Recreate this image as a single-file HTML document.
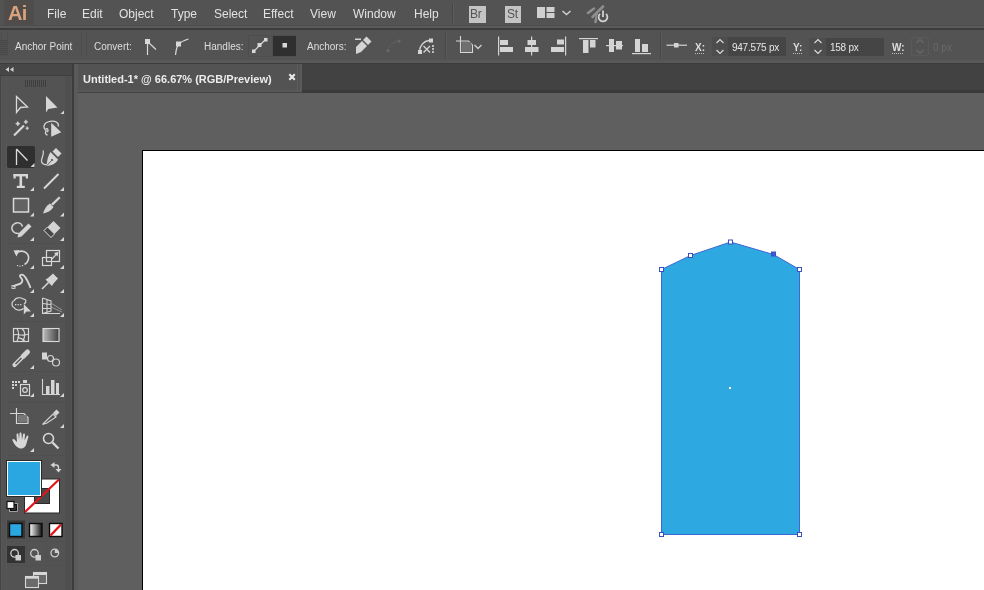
<!DOCTYPE html>
<html><head><meta charset="utf-8">
<style>
*{margin:0;padding:0;box-sizing:border-box}
html,body{width:984px;height:590px;overflow:hidden;background:#535353;font-family:"Liberation Sans",sans-serif;color:#dcdcdc;position:relative}
.a{position:absolute;white-space:nowrap;will-change:transform}
.menu{font-size:12px;color:#e2e2e2;top:7px;line-height:14px}
.ctl{font-size:10px;color:#dedede;top:41px;line-height:11px}
svg{position:absolute;left:0;top:0}
</style></head><body>
<!-- ============ menu bar ============ -->
<div class="a" style="left:0;top:0;width:984px;height:25px;background:#535353"></div>
<div class="a" style="left:0;top:25px;width:984px;height:1px;background:#4e4e4e"></div>
<div class="a" style="left:0;top:26px;width:984px;height:2px;background:#595959"></div>
<div class="a" style="left:0;top:28px;width:984px;height:2px;background:#3d3d3d"></div>
<!-- Ai logo -->
<div class="a" style="left:4px;top:0;width:30px;height:25px;background:#504c4a"></div>
<div class="a" style="left:8px;top:2px;font-size:20px;font-weight:bold;color:#d9a27e;line-height:22px;letter-spacing:-0.8px">Ai</div>
<div class="a menu" style="left:47px">File</div>
<div class="a menu" style="left:82px">Edit</div>
<div class="a menu" style="left:119px">Object</div>
<div class="a menu" style="left:171px">Type</div>
<div class="a menu" style="left:214px">Select</div>
<div class="a menu" style="left:263px">Effect</div>
<div class="a menu" style="left:310px">View</div>
<div class="a menu" style="left:353px">Window</div>
<div class="a menu" style="left:414px">Help</div>
<div class="a" style="left:452px;top:3px;width:1px;height:20px;background:#474747"></div>
<div class="a" style="left:453px;top:3px;width:1px;height:20px;background:#5c5c5c"></div>
<!-- Br / St -->
<div class="a" style="left:469px;top:6px;width:17px;height:17px;background:#c4c4c4"></div>
<div class="a" style="left:470px;top:7px;font-size:12px;color:#555555;line-height:14px;letter-spacing:-0.3px">Br</div>
<div class="a" style="left:505px;top:6px;width:16px;height:17px;background:#c4c4c4"></div>
<div class="a" style="left:507px;top:7px;font-size:12px;color:#555555;line-height:14px;letter-spacing:-0.3px">St</div>

<!-- ============ control bar ============ -->
<div class="a" style="left:0;top:30px;width:984px;height:30px;background:#535353"></div>
<div class="a" style="left:0;top:60px;width:984px;height:3px;background:#585858"></div>
<div class="a" style="left:0;top:63px;width:984px;height:1px;background:#3c3c3c"></div>
<div class="a ctl" style="left:15px">Anchor Point</div>
<div class="a ctl" style="left:94px">Convert:</div>
<div class="a ctl" style="left:204px">Handles:</div>
<div class="a ctl" style="left:307px">Anchors:</div>
<!-- handles group -->
<div class="a" style="left:248px;top:35px;width:48px;height:22px;background:#4e4e4e"></div>
<div class="a" style="left:249px;top:36px;width:23px;height:20px;background:#535353"></div>
<div class="a" style="left:273px;top:36px;width:23px;height:20px;background:#2f2f2f"></div>
<!-- X field -->
<div class="a ctl" style="left:695px;top:42px;font-weight:bold">X:</div>
<div class="a" style="left:712px;top:37px;width:74px;height:19px;background:#474747"></div>
<div class="a" style="left:712px;top:37px;width:16px;height:19px;background:#4d4d4d"></div>
<div class="a" style="left:729px;top:37px;width:57px;height:19px;background:#454545"></div>
<div class="a ctl" style="left:732px;top:42px;letter-spacing:-0.25px;color:#e6e6e6">947.575 px</div>
<!-- Y field -->
<div class="a ctl" style="left:793px;top:42px;font-weight:bold">Y:</div>
<div class="a" style="left:809px;top:38px;width:75px;height:18px;background:#474747"></div>
<div class="a" style="left:809px;top:38px;width:17px;height:18px;background:#4d4d4d"></div>
<div class="a" style="left:827px;top:38px;width:57px;height:18px;background:#454545"></div>
<div class="a ctl" style="left:830px;top:42px;letter-spacing:-0.25px;color:#e6e6e6">158 px</div>
<!-- W field -->
<div class="a ctl" style="left:892px;top:42px;font-weight:bold">W:</div>
<div class="a" style="left:911px;top:37px;width:18px;height:19px;border:1px solid #5a5a5a;border-radius:2px"></div>
<div class="a ctl" style="left:933px;top:42px;color:#6a6a6a">0 px</div>

<!-- ============ toolbar ============ -->
<div class="a" style="left:0;top:64px;width:72px;height:526px;background:#535353"></div>
<div class="a" style="left:0;top:64px;width:72px;height:11px;background:#474747"></div>
<div class="a" style="left:0;top:75px;width:72px;height:1px;background:#3f3f3f"></div>
<div class="a" style="left:0;top:76px;width:1px;height:514px;background:#444444"></div>
<div class="a" style="left:1px;top:76px;width:1px;height:514px;background:#575757"></div>
<div class="a" style="left:6px;top:76px;width:1px;height:514px;background:#575757"></div>
<div class="a" style="left:65px;top:76px;width:6px;height:514px;background:#4f4f4f"></div>
<div class="a" style="left:72px;top:64px;width:2px;height:526px;background:#3c3c3c"></div>
<div class="a" style="left:74px;top:64px;width:4px;height:526px;background:#5a5a5a"></div>
<!-- selected tool -->
<div class="a" style="left:7px;top:146px;width:28px;height:22px;background:#2f2f2f;border-radius:2px"></div>

<!-- ============ tab bar ============ -->
<div class="a" style="left:78px;top:64px;width:906px;height:26px;background:#424242"></div>
<div class="a" style="left:78px;top:90px;width:906px;height:3px;background:#3a3a3a"></div>
<div class="a" style="left:78px;top:64px;width:224px;height:26px;background:#535353"></div>
<div class="a" style="left:78px;top:90px;width:224px;height:2px;background:#585858"></div>
<div class="a" style="left:78px;top:92px;width:224px;height:1px;background:#424242"></div>
<div class="a" style="left:297px;top:64px;width:1px;height:28px;background:#5c5c5c"></div>
<div class="a" style="left:300px;top:64px;width:2px;height:28px;background:#5a5a5a"></div>
<div class="a" style="left:83px;top:73px;font-size:11px;font-weight:bold;color:#ececec;line-height:12px">Untitled-1* @ 66.67% (RGB/Preview)</div>

<!-- ============ pasteboard / artboard ============ -->
<div class="a" style="left:78px;top:93px;width:906px;height:497px;background:#5f5f5f"></div>
<div class="a" style="left:142px;top:150px;width:842px;height:440px;background:#000000"></div>
<div class="a" style="left:143px;top:151px;width:841px;height:439px;background:#ffffff"></div>

<svg width="984" height="590" viewBox="0 0 984 590">


<!-- tab close -->
<path d="M289.3,74.3 L294.8,79.8 M294.8,74.3 L289.3,79.8" stroke="#ececec" stroke-width="2"/>
<!-- ===== menu bar icons ===== -->
<!-- workspace -->
<g fill="#d0d0d0">
  <rect x="537" y="7" width="8" height="11"/>
  <rect x="546.5" y="7" width="8" height="5"/>
  <rect x="546.5" y="13" width="8" height="5"/>
</g>
<path d="M562.5,11 L566.5,14.5 L570.5,11" fill="none" stroke="#d0d0d0" stroke-width="1.5"/>
<!-- sync/broadcast -->
<g stroke="#8e8e8e" stroke-width="2.6" fill="none" stroke-linecap="round">
  <line x1="588" y1="13" x2="594" y2="8.5"/>
  <line x1="592.5" y1="17" x2="603" y2="6.5"/>
  <line x1="595.5" y1="22" x2="597" y2="15"/>
</g>
<circle cx="603" cy="17.2" r="6" fill="#535353"/>
<path d="M600,13.8 A4.4,4.4 0 1 0 606,13.8" fill="none" stroke="#d2d2d2" stroke-width="1.8"/>
<line x1="603" y1="10.5" x2="603" y2="17" stroke="#d2d2d2" stroke-width="1.8"/>

<!-- ===== control bar icons ===== -->
<!-- grip -->
<g fill="#454545"><rect x="0" y="40" width="8" height="1"/><rect x="0" y="42" width="8" height="1"/><rect x="0" y="44" width="8" height="1"/><rect x="0" y="46" width="8" height="1"/><rect x="0" y="48" width="8" height="1"/><rect x="0" y="50" width="8" height="1"/><rect x="0" y="52" width="8" height="1"/><rect x="0" y="54" width="8" height="1"/></g><g fill="#4d4d4d"><rect x="1" y="32" width="1" height="24"/><rect x="7" y="32" width="1" height="24"/></g>
<!-- separators -->
<g fill="#4c4c4c"><rect x="81" y="32" width="1" height="24"/><rect x="86" y="32" width="1" height="24"/></g>
<g fill="#474747">
  <rect x="445" y="33" width="1" height="25"/>
  <rect x="660" y="33" width="1" height="25"/>
</g>
<g fill="#5b5b5b">
  <rect x="446" y="33" width="1" height="25"/>
  <rect x="661" y="33" width="1" height="25"/>
</g>
<!-- convert corner -->
<g stroke="#d8d8d8" stroke-width="1.2" fill="none">
  <line x1="147.5" y1="43" x2="147.5" y2="55"/>
  <line x1="149" y1="43" x2="156" y2="49.5"/>
</g>
<rect x="145" y="39" width="5" height="5" fill="#d8d8d8"/>
<!-- convert smooth -->
<path d="M175.5,55 C176,50 177,46 179,44 C182,41 185,40 188.5,39" fill="none" stroke="#d8d8d8" stroke-width="1.2"/>
<rect x="176" y="41.5" width="5" height="5" fill="#d8d8d8"/>
<!-- handles icons -->
<line x1="254" y1="51" x2="265" y2="40" stroke="#d8d8d8" stroke-width="1.2"/>
<g fill="#d8d8d8">
  <rect x="252" y="49.5" width="3.5" height="3.5"/>
  <rect x="264" y="38" width="3.5" height="3.5"/>
  <rect x="257.5" y="43" width="4" height="4"/>
  <rect x="282.5" y="43" width="4.5" height="4.5"/>
</g>
<!-- anchors: pen minus -->
<rect x="355" y="38.5" width="6" height="1.5" fill="#d4d4d4"/>
<path d="M356,54 L356,47 L362,41 L367,46 L361,52 Z" fill="#d4d4d4"/>
<path d="M363,40 L366.5,36.5 L371.5,41.5 L368,45 Z" fill="#d4d4d4"/>
<!-- anchors disabled -->
<g fill="#6a6a6a"><circle cx="388" cy="50.5" r="1.6"/><circle cx="399" cy="41" r="1.6"/></g>
<path d="M388,50.5 C389,45 393,42 399,41" fill="none" stroke="#606060" stroke-width="1"/>
<!-- anchors cut -->
<path d="M419.5,51 C420,45 424,41 429,40.5" fill="none" stroke="#d4d4d4" stroke-width="1.3"/>
<rect x="418" y="50" width="4" height="4" fill="#d4d4d4"/>
<rect x="429" y="38.5" width="4" height="4" fill="#d4d4d4"/>
<path d="M423.5,46 L430,52.5 M423.5,52.5 L430,46" stroke="#d4d4d4" stroke-width="1.3"/>
<g fill="#bdbdbd"><rect x="432" y="45" width="2" height="2"/><rect x="432" y="48" width="2" height="2"/><rect x="432" y="51" width="2" height="2"/></g>
<!-- artboard options icon -->
<g fill="none" stroke="#d6d6d6" stroke-width="1.1">
  <path d="M460.5,36 L460.5,52.5 L472.5,52.5 L472.5,45 L468.5,41 L456,41"/>
</g>
<rect x="461.5" y="42" width="10" height="10" fill="#6f6f6f"/>
<path d="M474.5,45 L478,48.5 L481.5,45" fill="none" stroke="#d0d0d0" stroke-width="1.3"/>
<!-- align -->
<g fill="#d4d4d4">
  <rect x="498" y="36.5" width="1.2" height="19"/><rect x="500" y="40" width="8" height="5"/><rect x="500" y="47" width="13" height="5"/>
  <rect x="531" y="36.5" width="1.2" height="19"/><rect x="527.5" y="40" width="8.5" height="5"/><rect x="525" y="47" width="13.5" height="5"/>
  <rect x="565" y="36.5" width="1.2" height="19"/><rect x="557" y="39.5" width="7" height="5"/><rect x="551" y="47" width="13" height="5"/>
  <rect x="579" y="38" width="19" height="1.2"/><rect x="583" y="40" width="5.5" height="13"/><rect x="590" y="40" width="5.5" height="7.5"/>
  <rect x="606" y="45" width="17" height="1.2"/><rect x="609" y="39" width="5" height="13"/><rect x="616" y="41" width="6" height="8.5"/>
  <rect x="632" y="53" width="19" height="1.2"/><rect x="635" y="39" width="5" height="13"/><rect x="642" y="44" width="6" height="8"/>
</g>
<!-- reference point -->
<rect x="666.5" y="44.6" width="20.5" height="1.2" fill="#d4d4d4"/>
<rect x="674" y="43" width="4.5" height="4.5" fill="#d4d4d4"/>
<!-- dotted underlines -->
<g fill="#bdbdbd">
  <rect x="695" y="53" width="1" height="1"/><rect x="697" y="53" width="1" height="1"/><rect x="699" y="53" width="1" height="1"/><rect x="701" y="53" width="1" height="1"/><rect x="703" y="53" width="1" height="1"/>
  <rect x="793" y="53" width="1" height="1"/><rect x="795" y="53" width="1" height="1"/><rect x="797" y="53" width="1" height="1"/><rect x="799" y="53" width="1" height="1"/><rect x="801" y="53" width="1" height="1"/>
  <rect x="892" y="53" width="1" height="1"/><rect x="894" y="53" width="1" height="1"/><rect x="896" y="53" width="1" height="1"/><rect x="898" y="53" width="1" height="1"/><rect x="900" y="53" width="1" height="1"/><rect x="902" y="53" width="1" height="1"/>
</g>
<!-- spinners -->
<g fill="none" stroke="#d8d8d8" stroke-width="1.2">
  <path d="M716.5,43 L720,39.5 L723.5,43 M716.5,50 L720,53.5 L723.5,50"/>
  <path d="M814.5,43 L818,39.5 L821.5,43 M814.5,50 L818,53.5 L821.5,50"/>
</g>
<g fill="none" stroke="#6a6a6a" stroke-width="1.2">
  <path d="M916.5,43 L920,39.5 L923.5,43 M916.5,50 L920,53.5 L923.5,50"/>
</g>


<!-- ===== fill/stroke ===== -->
<rect x="24" y="478.5" width="36" height="35" fill="#2a2a2a"/>
<rect x="25" y="479.5" width="34" height="33" fill="#ffffff"/>
<rect x="34" y="488" width="16" height="16" fill="#2a2a2a"/>
<rect x="35" y="489" width="14" height="14" fill="#484848"/>
<line x1="25" y1="512" x2="59" y2="479.5" stroke="#e3141c" stroke-width="2.2"/>
<rect x="6" y="460" width="36" height="37" fill="#2a2a2a"/>
<rect x="7" y="461" width="34" height="35" fill="#ffffff"/>
<rect x="8" y="462" width="32" height="33" fill="#2aa6e1"/>
<!-- swap -->
<path d="M54,465 L56,465 C57.5,465 58.5,466 58.5,467.5 L58.5,469.5" fill="none" stroke="#d4d4d4" stroke-width="1.4"/>
<polygon points="50.5,465 54.5,462 54.5,468" fill="#d4d4d4"/>
<polygon points="55.5,469 61.5,469 58.5,472.5" fill="#d4d4d4"/>
<!-- default -->
<rect x="9.5" y="503.5" width="8" height="8" fill="#111" stroke="#bbb" stroke-width="0.8"/>
<rect x="11.5" y="505.5" width="4" height="4" fill="#535353"/>
<rect x="7" y="501.5" width="7" height="7" fill="#ffffff" stroke="#111" stroke-width="1.2"/>
<!-- mode buttons -->
<rect x="7" y="520.5" width="18" height="18" fill="#373737"/>
<rect x="9.5" y="523.5" width="12.5" height="13" fill="#2aa6e1" stroke="#0c0c0c" stroke-width="1.4"/>
<rect x="29.5" y="523.5" width="12.5" height="13" fill="url(#gr2)" stroke="#0c0c0c" stroke-width="1.4"/>
<rect x="49.5" y="523.5" width="12.5" height="13" fill="#ffffff" stroke="#0c0c0c" stroke-width="1.4"/>
<line x1="50.5" y1="535.5" x2="61" y2="524.5" stroke="#e3141c" stroke-width="2.4"/>
<g fill="#505050"><rect x="26" y="520" width="1" height="20"/><rect x="46" y="520" width="1" height="20"/><rect x="26" y="545" width="1" height="19"/><rect x="46" y="545" width="1" height="19"/><rect x="7" y="541" width="58" height="1"/><rect x="7" y="565" width="58" height="1"/></g>
<!-- draw modes -->
<rect x="7" y="546" width="18" height="17" fill="#333333"/>
<g fill="none" stroke="#cfcfcf" stroke-width="1.3">
  <circle cx="14.6" cy="553.3" r="3.8"/>
  <circle cx="34.5" cy="553.3" r="3.8"/>
  <circle cx="54.8" cy="553" r="3.8"/>
</g>
<g fill="#cfcfcf"><rect x="15.5" y="555" width="5.5" height="5.5"/><rect x="35.5" y="555" width="5.5" height="5.5"/></g>
<path d="M54.8,553 L54.8,549.5 A3.5,3.5 0 0 1 58.3,553 Z" fill="#cfcfcf"/>
<!-- screen mode -->
<rect x="33.5" y="572.5" width="13" height="11" fill="#6a6a6a" stroke="#d6d6d6" stroke-width="1.1"/>
<rect x="33.5" y="572.5" width="13" height="2.5" fill="#d6d6d6"/>
<rect x="25.5" y="576.5" width="13" height="11" fill="#6a6a6a" stroke="#d6d6d6" stroke-width="1.1"/>
<rect x="25.5" y="576.5" width="13" height="2.2" fill="#d6d6d6"/>
<!-- toolbar group separators -->
<g fill="#4f4f4f">
  <rect x="7" y="243" width="58" height="1"/>
  <rect x="7" y="321" width="58" height="1"/>
  <rect x="7" y="371" width="58" height="1"/>
  <rect x="7" y="402" width="58" height="1"/>
  <rect x="7" y="455" width="58" height="1"/>
</g>

<!-- ===== toolbar icons ===== -->
<g fill="none" stroke="#d9d9d9" stroke-width="1.3" stroke-linejoin="miter">
  <!-- selection -->
  <polygon points="16.5,96.5 27.5,107 20.5,107.5 16.5,112.5"/>
</g>
<g fill="#d6d6d6">
  <!-- direct selection -->
  <polygon points="46,96 57.5,107.4 48.3,109 46,112.5"/>
  <!-- corner triangles -->
  <polygon points="64,110.5 64,114 60.5,114"/>
  <polygon points="34.5,163 34.5,167 30.5,167"/>
  <polygon points="34,187 34,191 30,191"/>
  <polygon points="64,187 64,191 60,191"/>
  <polygon points="34,212.5 34,216.5 30,216.5"/>
  <polygon points="64,212.5 64,216.5 60,216.5"/>
  <polygon points="34,237 34,241 30,241"/>
  <polygon points="64,237 64,241 60,241"/>
  <polygon points="34,265 34,269 30,269"/>
  <polygon points="64,265 64,269 60,269"/>
  <polygon points="34,289 34,293 30,293"/>
  <polygon points="64,289 64,293 60,293"/>
  <polygon points="34,313 34,317 30,317"/>
  <polygon points="64,313 64,317 60,317"/>
  <polygon points="34,365 34,369 30,369"/>
  <polygon points="34,393 34,397 30,397"/>
  <polygon points="64,393 64,397 60,397"/>
  <polygon points="64,424 64,428 60,428"/>
  <polygon points="34,448 34,452 30,452"/>
</g>
<!-- magic wand -->
<g stroke="#d6d6d6" fill="#d6d6d6">
  <line x1="14" y1="135.5" x2="24" y2="125.5" stroke-width="2.2"/>
  <path d="M17.8,121.5 L18.5,123 L20,123.7 L18.5,124.4 L17.8,126 L17.1,124.4 L15.6,123.7 L17.1,123 Z" stroke-width="0.6"/>
  <path d="M25.9,119.8 L26.5,121.2 L27.9,121.9 L26.5,122.6 L25.9,124 L25.3,122.6 L23.9,121.9 L25.3,121.2 Z" stroke-width="0.6"/>
  <path d="M27.2,126.5 L27.7,127.6 L28.8,128.2 L27.7,128.8 L27.2,130 L26.7,128.8 L25.6,128.2 L26.7,127.6 Z" stroke-width="0.5"/>
</g>
<!-- lasso -->
<g fill="none" stroke="#d6d6d6" stroke-width="1.3">
  <path d="M46.5,131 C42.5,128 43,122.5 50,121.3 C56,120.5 59,123 58.3,126.5"/>
  <path d="M46.5,131 C44.5,132 45.5,134.5 47.5,135 M45.5,129 C48,128 49,131 47,132"/>
</g>
<polygon points="51.2,122.7 61.2,132.3 51.2,136.7" fill="#d6d6d6"/>
<!-- anchor point tool (selected) -->
<g fill="none" stroke="#dcdcdc" stroke-width="1.3">
  <line x1="16.5" y1="149" x2="16.5" y2="165"/>
  <line x1="16.5" y1="149" x2="27.5" y2="160.5"/>
</g>
<!-- pen -->
<polygon points="52.5,151.5 56,148 61.5,153.5 58,157" fill="#d6d6d6"/>
<path d="M50.5,152 L58,159.5 C56.5,163 52,165.5 46.5,166 C47,160.5 48,155.5 50.5,152 Z" fill="#d6d6d6"/>
<line x1="47" y1="165.5" x2="51.5" y2="160.5" stroke="#535353" stroke-width="0.9"/>
<circle cx="52" cy="160" r="1.1" fill="#535353"/>
<path d="M43,150.5 C44.5,153 42,157 41.5,160.5 C41.2,163.5 44,165 47,164.5" fill="none" stroke="#d4d4d4" stroke-width="1.2"/>
<!-- type -->
<g fill="#d8d8d8">
  <rect x="13.5" y="174" width="14.5" height="2.4"/>
  <rect x="13.5" y="174" width="2.2" height="4.5"/>
  <rect x="25.8" y="174" width="2.2" height="4.5"/>
  <rect x="19.5" y="174" width="2.6" height="14"/>
  <rect x="16.8" y="185.8" width="8" height="2.2"/>
</g>
<!-- line -->
<line x1="44" y1="188.5" x2="58.5" y2="174" stroke="#d8d8d8" stroke-width="2"/>
<!-- rectangle -->
<rect x="13.5" y="198.5" width="15" height="13.5" fill="#626262" stroke="#dadada" stroke-width="1.5"/>
<!-- paintbrush -->
<g fill="#d4d4d4">
  <path d="M51,204 L59,196.5 L60.5,198 L53,205.5 Z"/>
  <path d="M43,213.5 C44.5,209 46.5,205.5 50,203.5 L53.5,207 C51.5,210.5 48,212.5 43,213.5 Z"/>
</g>
<!-- shaper -->
<path d="M19,233.5 C12.5,234 10,228 13.5,224.5 C16.5,221.5 21.5,222.5 22.5,226.5" fill="none" stroke="#d4d4d4" stroke-width="1.5"/>
<path d="M17.5,237.5 L18.5,233.5 L28.5,223.5 L31.5,226.5 L21.5,236.5 Z" fill="#d4d4d4"/>
<!-- eraser -->
<path d="M44,230.5 L53.5,221 L60.5,228 L51,237.5 Z" fill="#d4d4d4"/>
<path d="M44,230.5 L47.5,227 L54.5,234 L51,237.5 Z" fill="#474747" stroke="#d4d4d4" stroke-width="1"/>
<!-- rotate -->
<path d="M15.5,254 C18,250.5 24,250 27,253.5 C30,257 28.5,262.5 24.5,264.5" fill="none" stroke="#d6d6d6" stroke-width="1.6"/>
<polygon points="13.5,250.5 19.5,250 16.5,256.5" fill="#d6d6d6"/>
<g fill="#d0d0d0"><rect x="17" y="265" width="1.2" height="1.2"/><rect x="19.5" y="265.5" width="1.2" height="1.2"/><rect x="22" y="265" width="1.2" height="1.2"/></g>
<!-- scale -->
<g fill="none" stroke="#d8d8d8" stroke-width="1.2">
  <rect x="46.5" y="250.5" width="13" height="11"/>
  <rect x="42.5" y="257.5" width="9" height="8"/>
  <line x1="52" y1="259" x2="57.5" y2="253"/>
</g>
<polygon points="58.5,252 54,253 57.5,256.5" fill="#d8d8d8"/>
<!-- width tool -->
<path d="M13.5,287 C16,283 20,286 22,282 C24,278 18,277 20.5,275 C23,273.5 25.5,277 27,280 C28.5,283 30,286 30.5,288" fill="none" stroke="#d4d4d4" stroke-width="1.8"/>
<rect x="12" y="285.5" width="3" height="3" fill="none" stroke="#d4d4d4" stroke-width="0.9"/>
<!-- puppet warp pin -->
<path d="M48,278 L53,273.5 L58,278.5 L53.5,283.5 L52,286 L45.5,279.5 Z" fill="#d4d4d4"/>
<line x1="42" y1="289" x2="48.5" y2="282.5" stroke="#d4d4d4" stroke-width="1.6"/>
<!-- shape builder -->
<path d="M24,304 C27,302 26.5,299 23,298.8 C20.5,297 15,297.5 14.5,300.5 C11.5,301 11,306 14,307.5 C15.5,310.5 21,311 23.5,308.5" fill="none" stroke="#d4d4d4" stroke-width="1.2"/>
<g fill="#d4d4d4"><rect x="15" y="304" width="1.3" height="1.3"/><rect x="17.5" y="304" width="1.3" height="1.3"/><rect x="20" y="304" width="1.3" height="1.3"/></g>
<polygon points="23.8,304 31,311.5 26.5,311.5 23.8,314.5" fill="#d4d4d4"/>
<!-- perspective grid -->
<g fill="none" stroke="#d4d4d4" stroke-width="1.1">
  <path d="M42.5,298 L42.5,313.5 L60,313.5"/>
  <path d="M42.5,298 L51,301 L51,311 L42.5,313.5"/>
  <path d="M47,299.5 L47,312.5 M42.5,303.5 L51,304.5 M42.5,308.5 L51,308.5"/>
  <path d="M51,303 L62,310 M51,307 L62,312" stroke="#a8a8a8" stroke-width="0.8"/>
</g>
<!-- mesh -->
<g fill="none" stroke="#d6d6d6" stroke-width="1.2">
  <rect x="13.5" y="328.5" width="15" height="13"/>
  <path d="M17,328.5 C19,332 19,337 17,341.5 M13.5,335 C17,333 22,337 28.5,334 M22,328.5 C26,332 25,338 22.5,341.5 M17.5,337 C20,339 23,338 25,341.5"/>
</g>
<!-- gradient -->
<defs><linearGradient id="gr" x1="0" x2="1" y1="0" y2="0"><stop offset="0" stop-color="#bdbdbd"/><stop offset="1" stop-color="#3e3e3e"/></linearGradient>
<linearGradient id="gr2" x1="0" x2="1" y1="0" y2="0"><stop offset="0" stop-color="#ffffff"/><stop offset="1" stop-color="#111111"/></linearGradient></defs>
<rect x="43" y="328.5" width="16" height="13" fill="url(#gr)" stroke="#dadada" stroke-width="1.1"/>
<!-- eyedropper -->
<line x1="14.5" y1="365" x2="23.5" y2="356" stroke="#d4d4d4" stroke-width="4.2" stroke-linecap="round"/>
<line x1="15.5" y1="364" x2="21.5" y2="358" stroke="#535353" stroke-width="1.4"/>
<line x1="23.5" y1="356" x2="27.5" y2="352" stroke="#d4d4d4" stroke-width="5" stroke-linecap="round"/>
<!-- blend -->
<rect x="42" y="352.5" width="5" height="7" fill="#d4d4d4"/>
<g fill="none" stroke="#d4d4d4" stroke-width="1.2"><circle cx="50.5" cy="358.5" r="3"/><circle cx="56" cy="362.5" r="3.5"/></g>
<!-- symbol sprayer -->
<g fill="#d4d4d4">
  <rect x="12" y="381" width="2" height="2"/><rect x="15" y="381" width="2" height="2"/><rect x="18" y="381" width="2" height="2"/>
  <rect x="12" y="384" width="2" height="2"/><rect x="15" y="384" width="2" height="2"/>
  <rect x="12" y="387" width="2" height="2"/>
  <rect x="23" y="380" width="4" height="3"/>
</g>
<g fill="none" stroke="#d8d8d8" stroke-width="1.2"><rect x="20.5" y="384.5" width="9" height="11"/><circle cx="25" cy="390" r="2.3"/></g>
<!-- column graph -->
<path d="M42.5,379 L42.5,394.5 L60,394.5" fill="none" stroke="#d4d4d4" stroke-width="1.1"/>
<g fill="#d4d4d4"><rect x="46" y="386" width="3.5" height="8"/><rect x="51" y="380" width="3.5" height="14"/><rect x="56" y="383" width="3" height="11"/></g>
<!-- artboard -->
<g fill="none" stroke="#d6d6d6" stroke-width="1.2">
  <path d="M10,413.5 L17,413.5 M16.5,408 L16.5,413.5"/>
  <path d="M16.5,413.5 L24,413.5 L28,417.5 L28,423.5 L16.5,423.5 Z"/>
</g>
<rect x="18" y="415" width="9" height="7.5" fill="#777"/>
<!-- slice -->
<path d="M42.5,424.5 L53,414 L56,417 L47,423 Z" fill="none" stroke="#d4d4d4" stroke-width="1.2"/>
<path d="M53,413 L56.5,409.5 L59.5,412.5 L56,416 Z" fill="#d4d4d4"/>
<!-- hand -->
<path d="M20.5,448.5 C17,448 14,444 12.5,440.5 C12,439 13.5,438.5 14.5,439.5 L17,442 L16.5,434.5 C16.5,433 18.5,433 18.5,434.5 L19,440 L19.5,433.5 C19.5,432 21.5,432 21.5,433.5 L22,440 L23,434.5 C23.2,433 25,433.2 25,434.7 L24.5,440.5 L26.5,436.5 C27,435 28.7,435.5 28.3,437 L26.5,443.5 C25.5,447 24,448.5 20.5,448.5 Z" fill="#d8d8d8"/>
<!-- zoom -->
<circle cx="48.5" cy="438.5" r="5" fill="none" stroke="#d8d8d8" stroke-width="1.6"/>
<line x1="52.5" y1="442.5" x2="58.5" y2="448.5" stroke="#d8d8d8" stroke-width="2.4"/>
<!-- header double arrow -->
<g fill="#d0d0d0"><polygon points="5.5,69.5 9,67 9,72"/><polygon points="10,69.5 13.5,67 13.5,72"/></g>
<!-- grip -->
<g fill="#3e3e3e">
<rect x="25" y="80" width="1" height="7"/><rect x="27" y="80" width="1" height="7"/><rect x="29" y="80" width="1" height="7"/><rect x="31" y="80" width="1" height="7"/><rect x="33" y="80" width="1" height="7"/><rect x="35" y="80" width="1" height="7"/><rect x="37" y="80" width="1" height="7"/><rect x="39" y="80" width="1" height="7"/><rect x="41" y="80" width="1" height="7"/><rect x="43" y="80" width="1" height="7"/><rect x="45" y="80" width="1" height="7"/>
</g>

<!-- shape -->
<polygon points="661.5,269.5 690.5,255.5 730.5,242 773.5,254.5 799.5,269.5 799.5,534.5 661.5,534.5" fill="#2ea8e1"/>
<polyline points="661.5,534.5 661.5,269.5 690.5,255.5 730.5,242 773.5,254.5 799.5,269.5 799.5,534.5 661.5,534.5" fill="none" stroke="#3f67d3" stroke-width="1"/>
<g fill="#ffffff" stroke="#3a4fc0" stroke-width="1">
<rect x="659.5" y="267.5" width="4" height="4"/>
<rect x="688.5" y="253.5" width="4" height="4"/>
<rect x="728.5" y="240" width="4" height="4"/>
<rect x="797.5" y="267.5" width="4" height="4"/>
<rect x="659.5" y="532.5" width="4" height="4"/>
<rect x="797.5" y="532.5" width="4" height="4"/>
</g>
<rect x="771.5" y="252" width="4" height="4" fill="#3d5ad6" stroke="#3a4fc0"/>
<rect x="729" y="387" width="2" height="2" fill="#ffffff"/>
</svg>
</body></html>
